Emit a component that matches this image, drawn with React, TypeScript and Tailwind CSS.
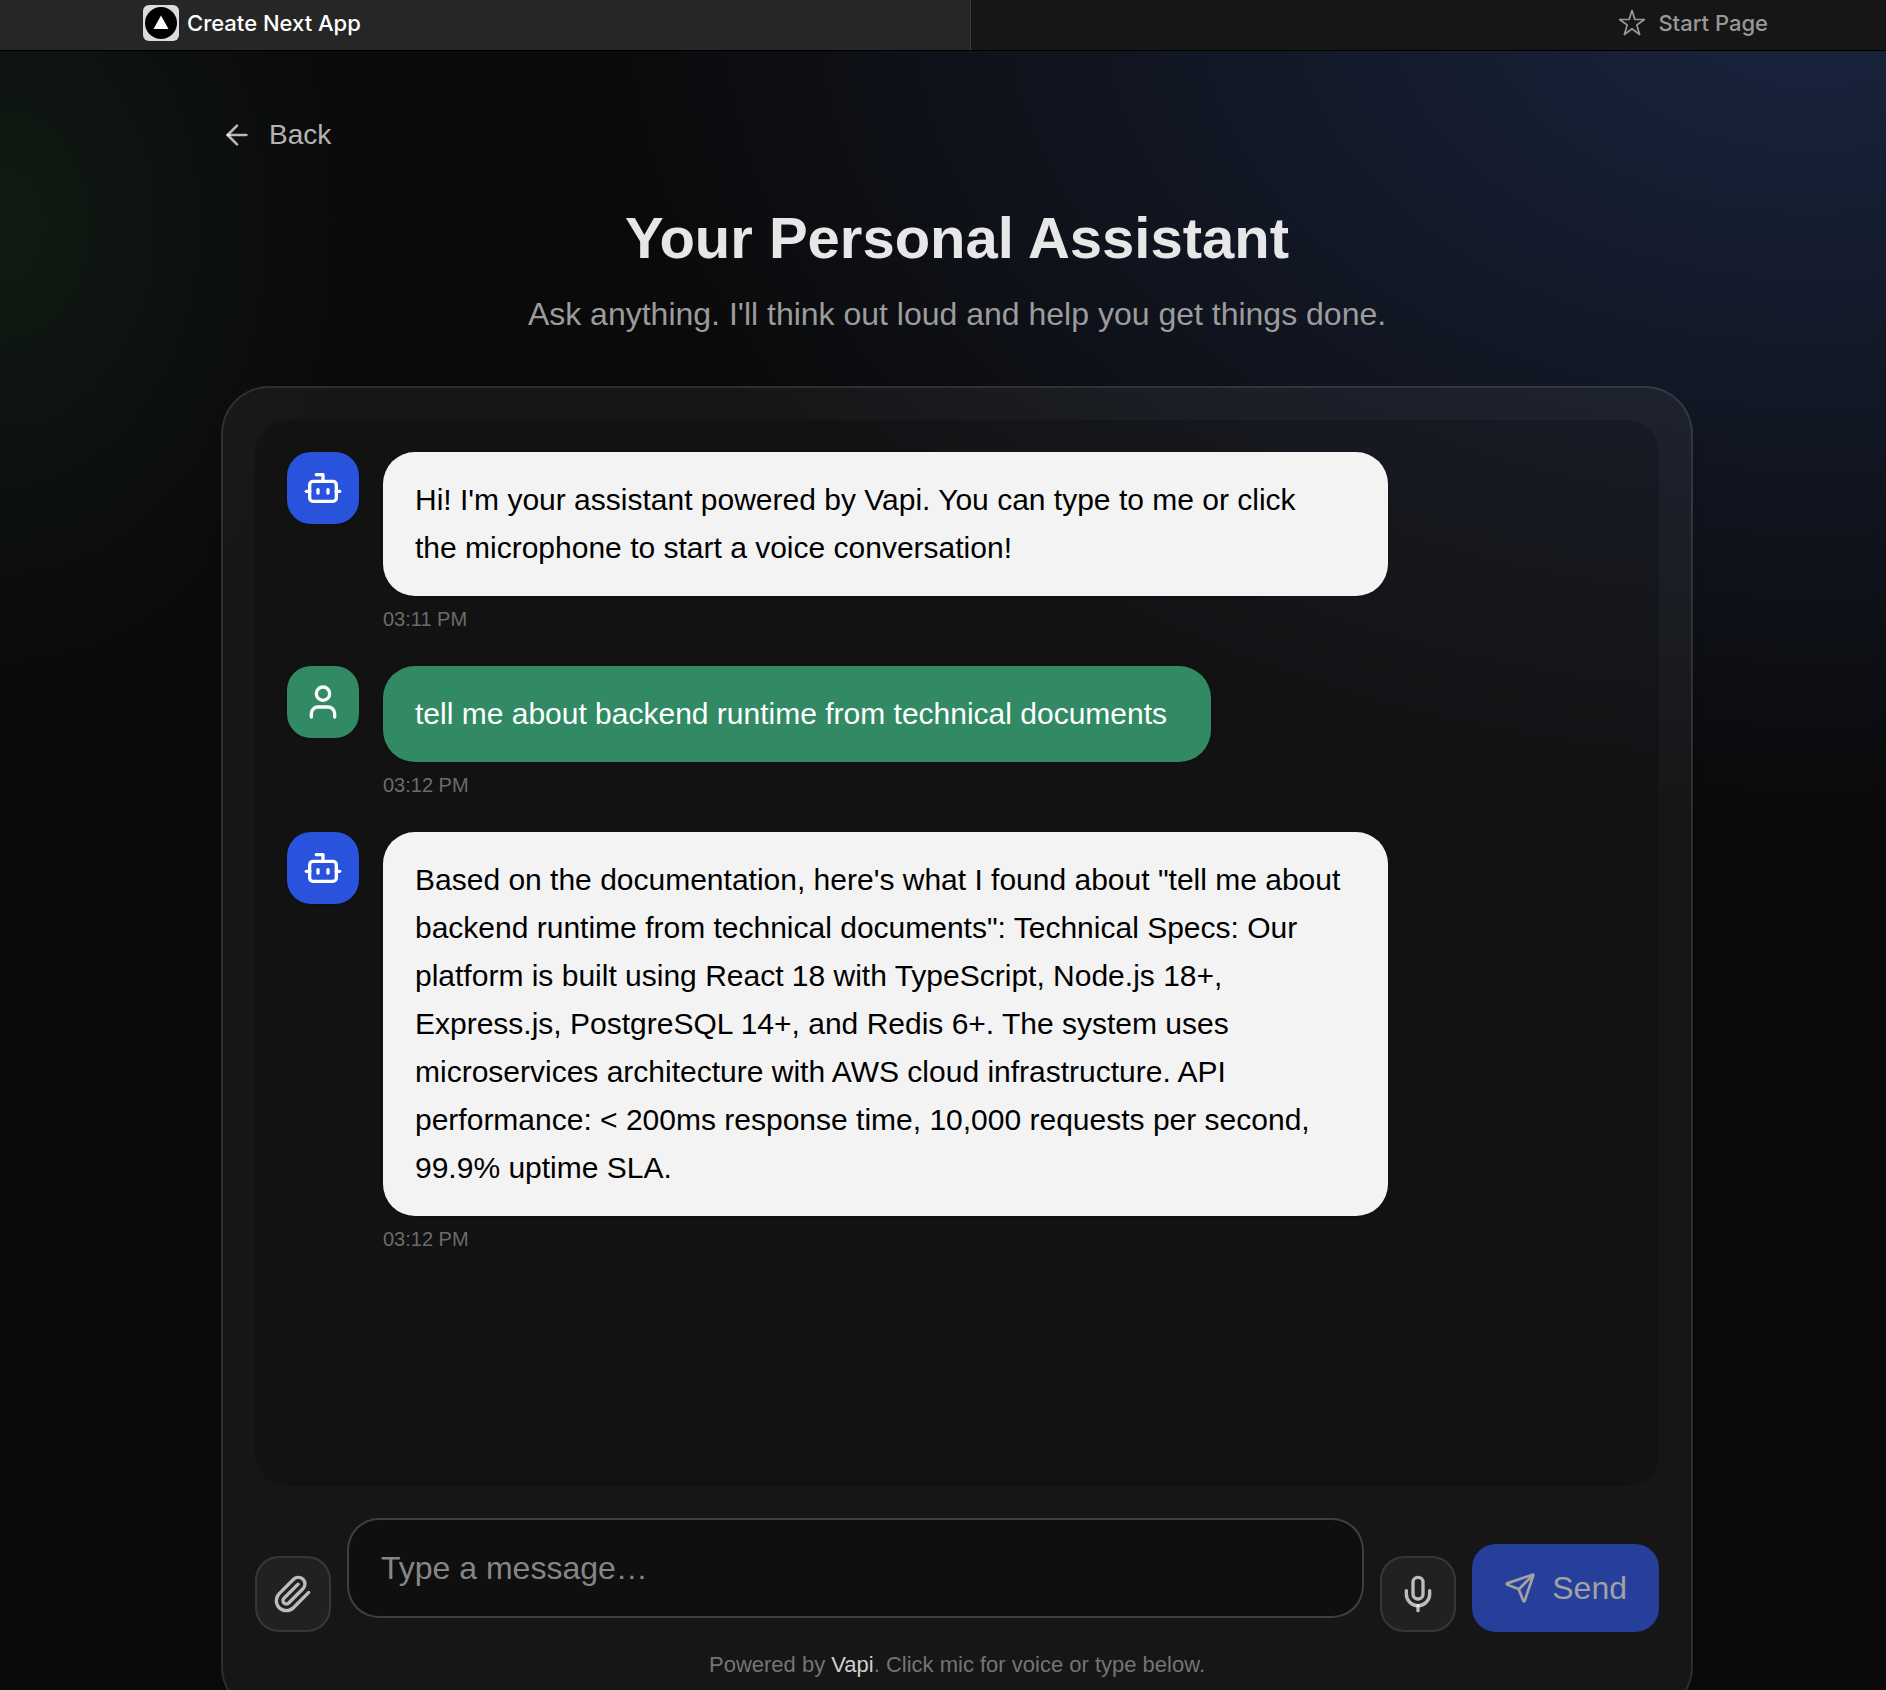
import { useState } from 'react';
import { ArrowLeft, Bot, Send, User } from 'lucide-react';
import clsx from 'clsx';

type Message = {
  id: number;
  role: 'assistant' | 'user';
  text: string;
  time: string;
};

const messages: Message[] = [
  {
    id: 1,
    role: 'assistant',
    text: "Hi! I'm your assistant powered by Vapi. You can type to me or click the microphone to start a voice conversation!",
    time: '03:11 PM',
  },
  {
    id: 2,
    role: 'user',
    text: 'tell me about backend runtime from technical documents',
    time: '03:12 PM',
  },
  {
    id: 3,
    role: 'assistant',
    text: 'Based on the documentation, here\'s what I found about "tell me about backend runtime from technical documents": Technical Specs: Our platform is built using React 18 with TypeScript, Node.js 18+, Express.js, PostgreSQL 14+, and Redis 6+. The system uses microservices architecture with AWS cloud infrastructure. API performance: < 200ms response time, 10,000 requests per second, 99.9% uptime SLA.',
    time: '03:12 PM',
  },
];

function PaperclipIcon() {
  return (
    <svg viewBox="0 0 24 24" className="size-10" fill="none" stroke="currentColor" strokeWidth="2" strokeLinecap="round" strokeLinejoin="round">
      <path d="m21.44 11.05-9.19 9.19a6 6 0 0 1-8.49-8.49l8.57-8.57A4 4 0 1 1 18 8.84l-8.59 8.57a2 2 0 0 1-2.83-2.83l8.49-8.48" />
    </svg>
  );
}

function MicIcon() {
  return (
    <svg viewBox="0 0 24 24" className="size-10" fill="none" stroke="currentColor" strokeWidth="2" strokeLinecap="round" strokeLinejoin="round">
      <path d="M12 19v3" />
      <path d="M19 10v2a7 7 0 0 1-14 0v-2" />
      <rect x="9" y="2" width="6" height="13" rx="3" />
    </svg>
  );
}

function StarIcon() {
  return (
    <svg viewBox="0 0 28 28" className="size-7" fill="none" stroke="currentColor" strokeWidth="1.7" strokeLinejoin="round">
      <path d="M14 1.5 16.9 10.5H26.4L18.8 16 21.6 25.5 14 19.7 6.4 25.5 9.2 16 1.6 10.5H11.1Z" />
    </svg>
  );
}

function TabBar() {
  return (
    <nav className="flex h-[51px] shrink-0 border-b border-black bg-[#161616] font-['Inter',sans-serif] text-[22px] font-medium">
      <a href="#" className="flex w-[51.5%] items-center gap-2 border-r border-[#3c3c3c] bg-[#262626] pb-1 pl-[143px] text-white">
        <svg viewBox="0 0 36 36" className="size-9">
          <rect width="36" height="36" rx="6" fill="#dcdcdc" />
          <circle cx="18" cy="18" r="16" fill="#000" />
          <path d="M18 10.5 25.5 24h-15Z" fill="#fff" />
        </svg>
        Create Next App
      </a>
      <a href="#" className="flex flex-1 items-center justify-end gap-3 pr-[118px] pb-1 text-[#989898]">
        <StarIcon />
        Start Page
      </a>
    </nav>
  );
}

function MessageRow({ message }: { message: Message }) {
  const isUser = message.role === 'user';
  const Icon = isUser ? User : Bot;

  return (
    <li className="flex items-start gap-6">
      <div
        className={clsx(
          'flex size-18 shrink-0 items-center justify-center rounded-3xl text-white shadow-sm',
          isUser ? 'bg-[#318a63]' : 'bg-[#2953dc]'
        )}
      >
        <Icon className="size-10" />
      </div>
      <div className="max-w-[75%]">
        <p
          className={clsx(
            'rounded-[32px] py-6 pr-11 pl-8 text-[30px] leading-[48px] shadow-sm',
            isUser ? 'bg-[#318a63] text-white' : 'bg-[#f3f3f3] text-black'
          )}
        >
          {message.text}
        </p>
        <time className="mt-2 block text-xl leading-[30px] text-[#6b6b6b]">{message.time}</time>
      </div>
    </li>
  );
}

export default function App() {
  const [draft, setDraft] = useState('');

  return (
    <div className="flex h-screen flex-col overflow-hidden bg-[#0a0a0a] font-['Liberation_Sans',Arial,sans-serif]">
      <TabBar />

      <main className="flex-1 bg-[radial-gradient(1230px_830px_at_96%_-60px,#19243f,transparent),radial-gradient(355px_466px_at_0%_173px,#101a13,transparent)] pl-7">
        <div className="mx-auto max-w-[1536px] px-8 pt-16">
          <a href="#" className="inline-flex items-center gap-4 text-[28px] leading-10 text-white/70">
            <ArrowLeft className="size-8" />
            Back
          </a>

          <header className="mt-11 text-center">
            <h1 className="text-[58px] leading-[72px] font-bold text-[#e7e7e7]">Your Personal Assistant</h1>
            <p className="mt-4 text-[32px] leading-12 text-[#9c9c9c]">
              Ask anything. I'll think out loud and help you get things done.
            </p>
          </header>

          <section className="mt-12 rounded-[48px] border-2 border-white/10 bg-white/5 p-8 shadow-lg">
            <ul className="flex min-h-[1066px] flex-col gap-8 rounded-[32px] bg-black/18 p-8">
              {messages.map(message => (
                <MessageRow key={message.id} message={message} />
              ))}
            </ul>

            <form className="mt-8 flex items-end gap-4" onSubmit={e => e.preventDefault()}>
              <button
                type="button"
                aria-label="Attach file"
                className="flex size-19 shrink-0 items-center justify-center rounded-3xl border-2 border-white/10 bg-white/5 text-white/70"
              >
                <PaperclipIcon />
              </button>
              <textarea
                rows={1}
                aria-label="Message"
                placeholder="Type a message…"
                value={draft}
                onChange={e => setDraft(e.target.value)}
                className="mb-[14px] block h-[100px] min-w-0 flex-1 resize-none rounded-[32px] border-2 border-white/20 bg-black/30 px-8 py-6 text-[32px] leading-12 text-white outline-none placeholder:text-[#868686]"
              />
              <button
                type="button"
                aria-label="Start voice conversation"
                className="flex size-19 shrink-0 items-center justify-center rounded-3xl border-2 border-white/10 bg-white/5 text-white/70"
              >
                <MicIcon />
              </button>
              <button
                type="submit"
                className="flex h-22 shrink-0 items-center gap-4 rounded-3xl bg-[#253f9b] px-8 text-[32px] text-[#a2a2a2]"
              >
                <Send className="size-8" />
                Send
              </button>
            </form>

            <p className="mt-4 text-center text-[22px] leading-[33px] text-[#747474]">
              Powered by <span className="text-[#d0d0d0]">Vapi</span>. Click mic for voice or type below.
            </p>
          </section>
        </div>
      </main>
    </div>
  );
}
